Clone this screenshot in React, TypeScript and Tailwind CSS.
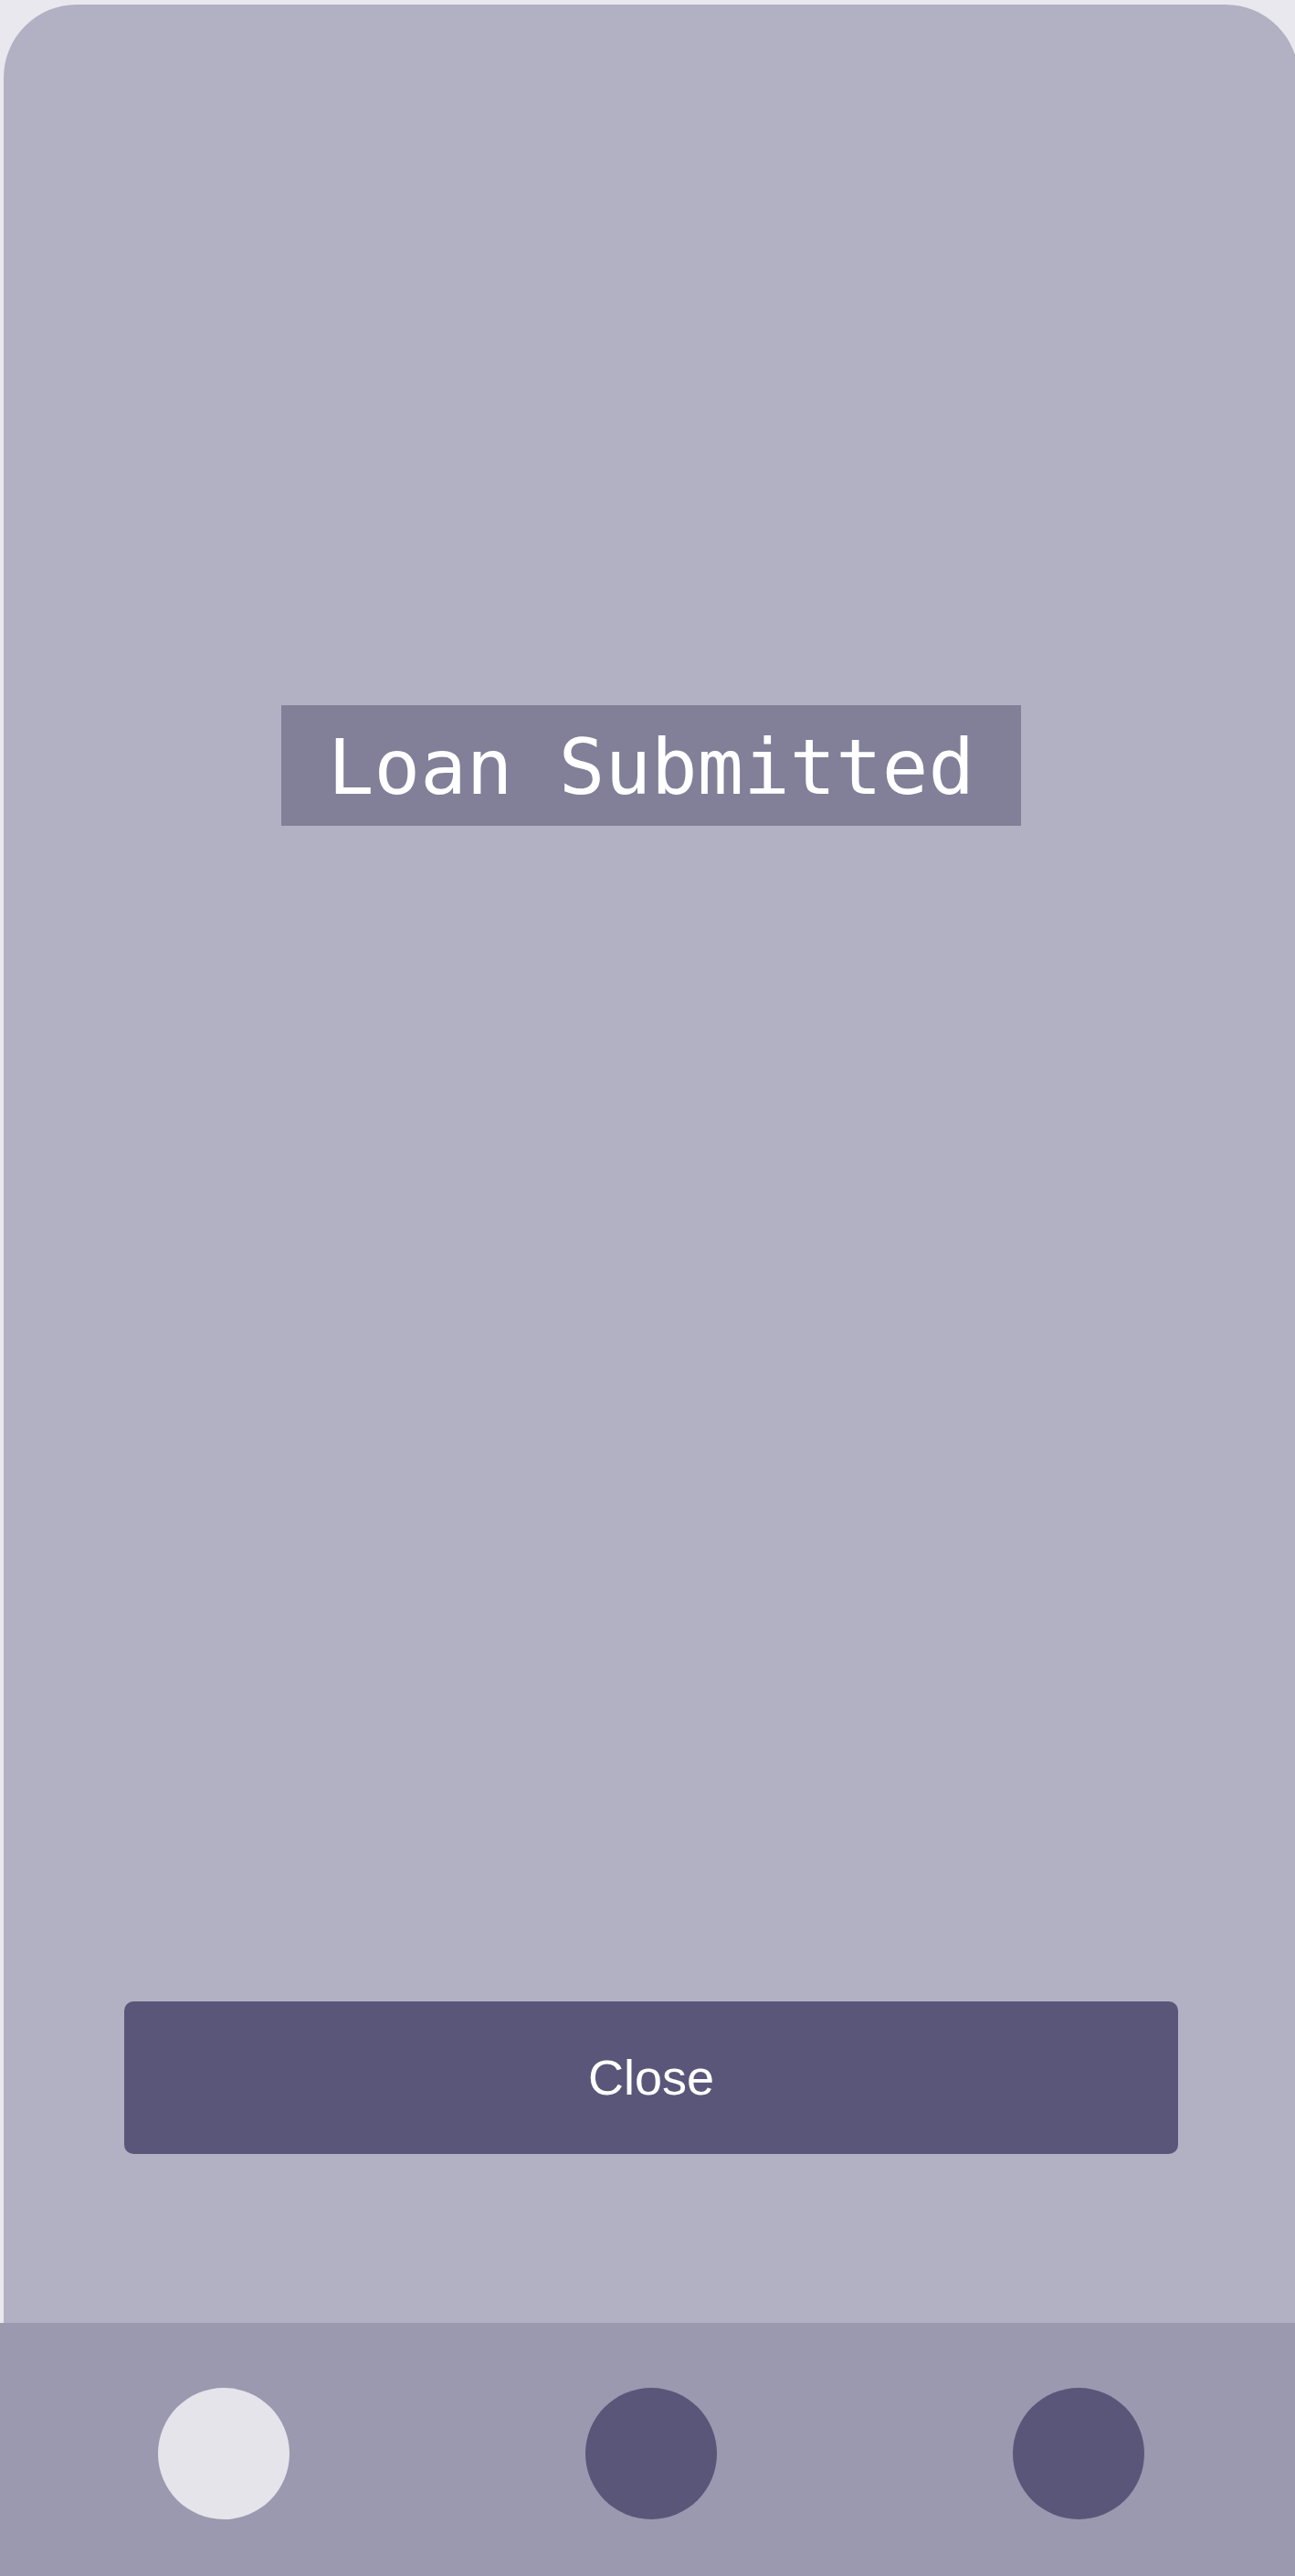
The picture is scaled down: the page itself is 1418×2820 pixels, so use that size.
export default function App() {
  return (
    <div className="w-[1418px] h-[2820px] overflow-hidden bg-[#e8e8ee] flex flex-col">
      {/* card */}
      <div className="ml-[4px] mt-[5px] w-[1418px] h-[2538px] shrink-0 rounded-t-[80px] bg-[#b2b1c3] flex flex-col items-center">
        <div className="mt-[767px] w-[810px] h-[132px] bg-[#827f99] flex items-center justify-center pt-[4px]">
          <span className="text-white text-[84px] leading-none font-['DejaVu_Sans_Mono',monospace]">
            Loan Submitted
          </span>
        </div>
        <button className="mt-[1287px] w-[1154px] h-[167px] rounded-[10px] bg-[#5a5679] text-white text-[54px] font-['Liberation_Sans',Arial,sans-serif]">
          Close
        </button>
      </div>

      {/* bottom bar */}
      <div className="w-full h-[277px] shrink-0 bg-[#9a99af] flex justify-between items-start pt-[71px] pl-[173px] pr-[165px]">
        <div className="w-[144px] h-[144px] rounded-full bg-[#e5e4eb]" />
        <div className="w-[144px] h-[144px] rounded-full bg-[#5a5679]" />
        <div className="w-[144px] h-[144px] rounded-full bg-[#5a5679]" />
      </div>
    </div>
  );
}
